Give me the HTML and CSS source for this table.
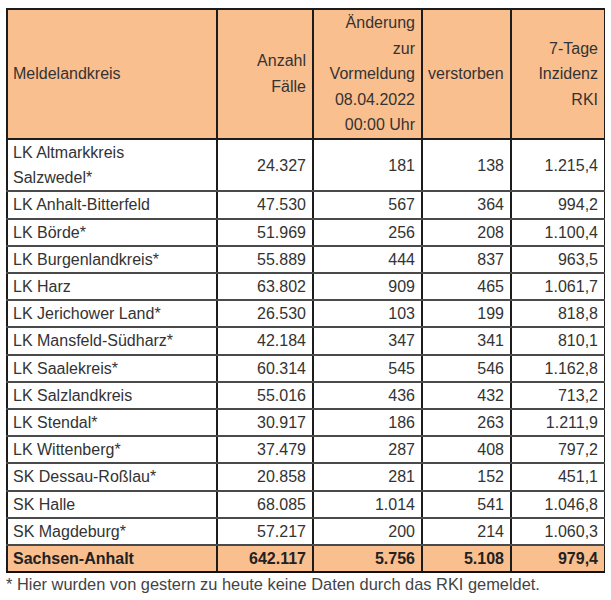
FILE: index.html
```html
<!DOCTYPE html>
<html lang="de">
<head>
<meta charset="utf-8">
<link rel="stylesheet" href="styles.css">
</head>
<body>
<table class="tbl">
  <colgroup>
    <col class="c1"><col class="c2"><col class="c3"><col class="c4"><col class="c5">
  </colgroup>
  <thead>
    <tr>
      <th class="l">Meldelandkreis</th>
      <th>Anzahl<br>Fälle</th>
      <th>Änderung<br>zur<br>Vormeldung<br>08.04.2022<br>00:00 Uhr</th>
      <th class="l">verstorben</th>
      <th>7-Tage<br>Inzidenz<br>RKI</th>
    </tr>
  </thead>
  <tbody>
    <tr><td class="l">LK Altmarkkreis<br>Salzwedel*</td><td>24.327</td><td>181</td><td>138</td><td>1.215,4</td></tr>
    <tr><td class="l">LK Anhalt-Bitterfeld</td><td>47.530</td><td>567</td><td>364</td><td>994,2</td></tr>
    <tr><td class="l">LK Börde*</td><td>51.969</td><td>256</td><td>208</td><td>1.100,4</td></tr>
    <tr><td class="l">LK Burgenlandkreis*</td><td>55.889</td><td>444</td><td>837</td><td>963,5</td></tr>
    <tr><td class="l">LK Harz</td><td>63.802</td><td>909</td><td>465</td><td>1.061,7</td></tr>
    <tr><td class="l">LK Jerichower Land*</td><td>26.530</td><td>103</td><td>199</td><td>818,8</td></tr>
    <tr><td class="l">LK Mansfeld-Südharz*</td><td>42.184</td><td>347</td><td>341</td><td>810,1</td></tr>
    <tr><td class="l">LK Saalekreis*</td><td>60.314</td><td>545</td><td>546</td><td>1.162,8</td></tr>
    <tr><td class="l">LK Salzlandkreis</td><td>55.016</td><td>436</td><td>432</td><td>713,2</td></tr>
    <tr><td class="l">LK Stendal*</td><td>30.917</td><td>186</td><td>263</td><td>1.211,9</td></tr>
    <tr><td class="l">LK Wittenberg*</td><td>37.479</td><td>287</td><td>408</td><td>797,2</td></tr>
    <tr><td class="l">SK Dessau-Roßlau*</td><td>20.858</td><td>281</td><td>152</td><td>451,1</td></tr>
    <tr><td class="l">SK Halle</td><td>68.085</td><td>1.014</td><td>541</td><td>1.046,8</td></tr>
    <tr><td class="l">SK Magdeburg*</td><td>57.217</td><td>200</td><td>214</td><td>1.060,3</td></tr>
    <tr class="total"><td class="l">Sachsen-Anhalt</td><td>642.117</td><td>5.756</td><td>5.108</td><td>979,4</td></tr>
  </tbody>
</table>
<p class="note">* Hier wurden von gestern zu heute keine Daten durch das RKI gemeldet.</p>
</body>
</html>
```

FILE: styles.css
```css
body {
  margin: 8px 6px;
  background: #fff;
  font-family: "Liberation Sans", Arial, sans-serif;
  font-size: 16px;
  color: #333;
}
.tbl {
  border-collapse: collapse;
  table-layout: fixed;
  width: 598px;
}
.c1 { width: 210px; }
.c2 { width: 96px; }
.c3 { width: 109px; }
.c4 { width: 89px; }
.c5 { width: 94px; }
.tbl th, .tbl td {
  border: 2px solid #1c1c1c;
  padding: 0 6px 0 5px;
  text-align: right;
  font-weight: normal;
}
.tbl th {
  background: #fabf8f;
  line-height: 25.6px;
  vertical-align: middle;
}
.tbl td {
  line-height: 25.2px;
  vertical-align: middle;
}
.tbl tbody tr td {
  border-top-color: #4a4a4a;
  border-bottom-color: #4a4a4a;
}
.tbl .l { text-align: left; }
.tbl tr.total td {
  background: #fabf8f;
  font-weight: bold;
  color: #222;
  border-top-color: #111;
  border-bottom-color: #111;
}
.note {
  margin: 0;
  font-size: 16.4px;
  line-height: 22px;
  color: #444;
}
```
